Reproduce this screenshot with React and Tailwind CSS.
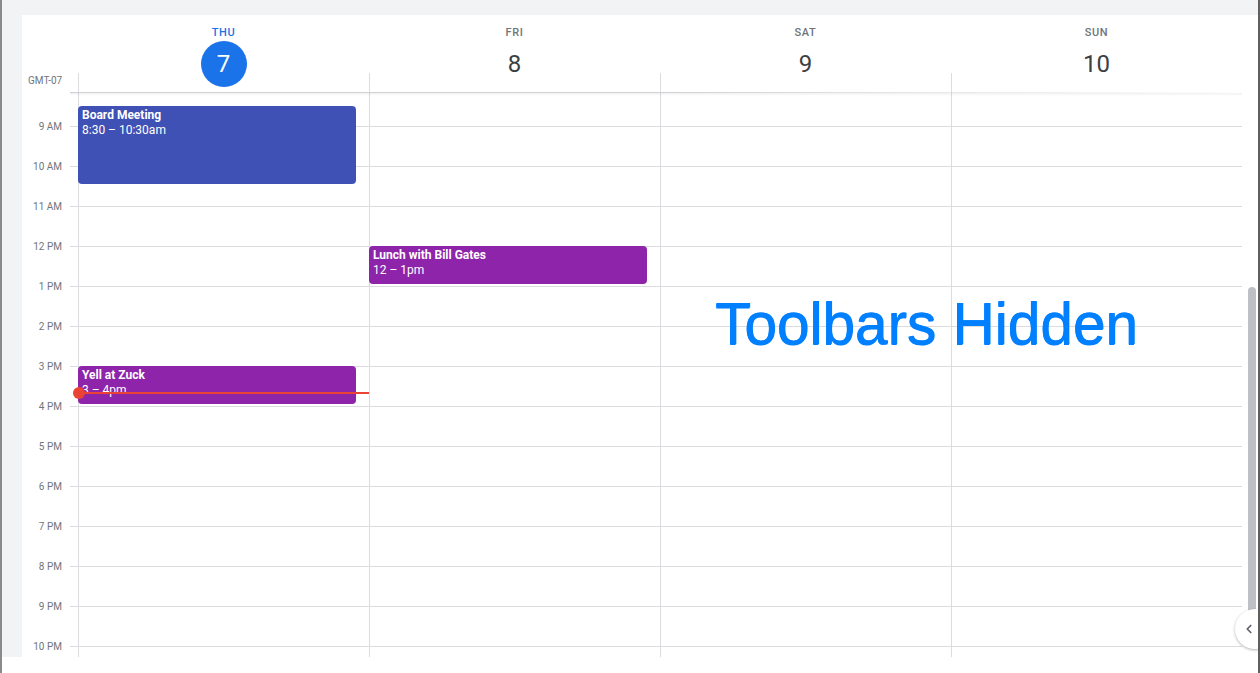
import { ChevronLeft } from 'lucide-react';

const days = [
  { name: 'THU', num: 7, today: true },
  { name: 'FRI', num: 8 },
  { name: 'SAT', num: 9 },
  { name: 'SUN', num: 10 },
];

const hours = ['9 AM', '10 AM', '11 AM', '12 PM', '1 PM', '2 PM', '3 PM', '4 PM', '5 PM', '6 PM', '7 PM', '8 PM', '9 PM', '10 PM'];

// events per day column, top/height in px from the top of the scrolled grid
const events = {
  0: [
    { title: 'Board Meeting', time: '8:30 – 10:30am', top: 13, height: 78, color: 'bg-[#3f51b5]' },
    { title: 'Yell at Zuck', time: '3 – 4pm', top: 273, height: 38, color: 'bg-[#8e24aa]' },
  ],
  1: [{ title: 'Lunch with Bill Gates', time: '12 – 1pm', top: 153, height: 38, color: 'bg-[#8e24aa]' }],
};

function DayHeader({ day }) {
  return (
    <div className="w-[291px] flex flex-col items-center relative">
      <div className={`mt-[12px] h-[12px] text-[11px] leading-[12px] font-medium tracking-[0.06em] ${day.today ? 'text-[#1a73e8]' : 'text-[#70757a]'}`}>
        {day.name}
      </div>
      <div
        className={`mt-[2px] w-[46px] h-[46px] rounded-full flex items-center justify-center text-[24px] ${
          day.today ? 'bg-[#1a73e8] text-white' : 'text-[#3c4043]'
        }`}
      >
        {day.num}
      </div>
      <div className="absolute left-0 bottom-0 h-[20px] border-l border-[#dadce0]" />
    </div>
  );
}

function DayColumn({ index }) {
  return (
    <div className="w-[291px] border-l border-[#dadce0] relative">
      <div className="h-[33px]" />
      {hours.map((h) => (
        <div key={h} className="h-[40px] border-t border-[#dadce0]" />
      ))}
      {(events[index] || []).map((ev) => (
        <div
          key={ev.title}
          className={`absolute -left-px w-[278px] rounded-[4px] px-[4px] pt-[2px] text-white text-[12px] leading-[15px] ${ev.color}`}
          style={{ top: ev.top, height: ev.height }}
        >
          <div className="font-bold">{ev.title}</div>
          <div>{ev.time}</div>
        </div>
      ))}
      {index === 0 && (
        <div className="absolute -left-px right-0 top-[299px] h-[2px] bg-[#ea4335]">
          <div className="absolute -left-[5px] -top-[5px] w-[12px] h-[12px] rounded-full bg-[#ea4335]" />
        </div>
      )}
    </div>
  );
}

export default function App() {
  return (
    <div
      className="w-[1260px] h-[673px] bg-white relative overflow-hidden border-l-2 border-r-2 border-l-[#8a8a8a] border-r-[#5f5f5f] flex flex-col"
      style={{ fontFamily: 'Roboto, "Liberation Sans", sans-serif' }}
    >
      <div className="h-[15px] bg-[#f1f3f4] shrink-0" />
      <div className="h-[642px] flex shrink-0 overflow-hidden">
        <div className="w-[20px] bg-[#f1f3f4]" />
        <div className="flex-1 flex flex-col overflow-hidden">
          {/* header */}
          <div className="h-[78px] flex relative shrink-0">
            <div className="w-[56px] flex items-end pb-[5px] pl-[6px] text-[10px] text-[#70757a]">GMT-07</div>
            {days.map((d) => (
              <DayHeader key={d.name} day={d} />
            ))}
            <div className="absolute left-[48px] right-[16px] bottom-0 h-px bg-gradient-to-r from-[#cfd1d4] via-[#cfd1d4] to-transparent" />
            <div className="absolute left-[48px] right-[16px] -bottom-[3px] h-[3px] bg-gradient-to-b from-[#0000000f] to-transparent z-10" />
          </div>
          {/* body */}
          <div className="flex-1 flex min-h-0">
            <div className="w-[56px]">
              <div className="h-[33px]" />
              {hours.map((h) => (
                <div key={h} className="h-[40px] flex">
                  <div className="w-[48px] pr-[8px] text-right text-[10px] leading-[12px] text-[#70757a] -mt-[5px]">{h}</div>
                  <div className="w-[8px] border-t border-[#dadce0]" />
                </div>
              ))}
            </div>
            {days.map((d, i) => (
              <DayColumn key={d.name} index={i} />
            ))}
            <div className="flex-1 flex justify-center pt-[194px]">
              <div className="w-[8px] h-[330px] ml-[3px] rounded-t-full bg-[#bdc1c6]" />
            </div>
          </div>
        </div>
      </div>
      <div className="flex-1 bg-white" />

      <div
        className="absolute left-[713px] top-[295px] text-[58.5px] leading-none text-[#0080ff] whitespace-nowrap [text-shadow:0.7px_0_0_#0080ff,0_0.5px_0_#0080ff]"
        style={{ fontFamily: '"Liberation Sans", Arial, sans-serif' }}
      >
        Toolbars Hidden
      </div>

      <div className="absolute left-[1233px] top-[609px] w-[40px] h-[40px] rounded-full bg-white shadow-[0_1px_3px_rgba(0,0,0,0.3)] flex items-center pl-[7px]">
        <ChevronLeft className="w-[14px] h-[14px] text-[#5f6368]" strokeWidth={3} />
      </div>
    </div>
  );
}
